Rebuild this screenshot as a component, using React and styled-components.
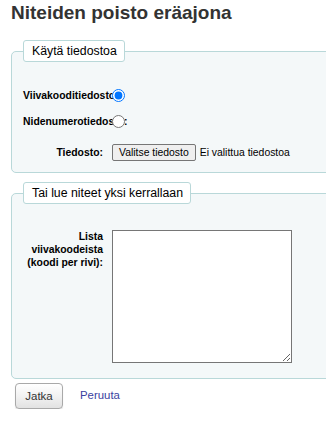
import React from "react";
import styled, { createGlobalStyle } from "styled-components";

const Global = createGlobalStyle`
  html, body { margin: 0; padding: 0; background: #ffffff; overflow: hidden; }
  body { font-family: "Liberation Sans", Arial, sans-serif; color: #000; }
`;

const Page = styled.div`
  padding: 2px 0 0 11px;
  width: 315px;
  overflow: hidden;
`;

const Title = styled.h1`
  margin: 0 0 16px;
  font-size: 19px;
  line-height: 22px;
  font-weight: bold;
  color: #333333;
  white-space: nowrap;
`;

const Fieldset = styled.fieldset`
  box-sizing: border-box;
  width: 360px;
  margin: 0 0 ${(p) => p.$mb}px;
  padding: 0 0 ${(p) => p.$pb}px 11px;
  border: 1px solid #b9d8d9;
  border-radius: 5px;
  background: #f4f8f9;
  min-inline-size: 0;
`;

const Legend = styled.legend`
  box-sizing: border-box;
  height: 22px;
  padding: 0 7px 0 8px;
  margin: 0;
  border: 1px solid #b9d8d9;
  border-radius: 3px;
  background: #ffffff;
  font-size: 12.3px;
  line-height: 20px;
  color: #000;
  white-space: nowrap;
`;

const Rows = styled.ol`
  list-style: none;
  margin: 0;
  padding: 0;
`;

const Row = styled.li`
  display: flex;
  align-items: ${(p) => (p.$top ? "flex-start" : "center")};
  min-height: 22px;
  margin-top: ${(p) => p.$mt}px;
`;

const Label = styled.label`
  flex: 0 0 80px;
  width: 80px;
  margin-right: 9px;
  font-size: 10.4px;
  font-weight: bold;
  line-height: 13px;
  text-align: right;
  white-space: ${(p) => (p.$wrap ? "normal" : "nowrap")};
  color: #000;
`;

const Radio = styled.input`
  position: relative;
  width: 13px;
  height: 13px;
  margin: 0;
  accent-color: #0075ff;
`;

const FileButton = styled.button`
  box-sizing: border-box;
  height: 17px;
  padding: 0 6px;
  margin: 0 4px 0 0;
  border: 1px solid #767676;
  border-radius: 2px;
  background: #efefef;
  font-family: "Liberation Sans", Arial, sans-serif;
  font-size: 10.4px;
  line-height: 15px;
  color: #000;
  white-space: nowrap;
`;

const FileText = styled.span`
  font-size: 10.4px;
  color: #000;
  white-space: nowrap;
`;

const TextArea = styled.textarea`
  box-sizing: border-box;
  width: 180px;
  height: 133px;
  margin: 0;
  border: 1px solid #767676;
  border-radius: 0;
  background: #ffffff;
`;

const Actions = styled.div`
  display: flex;
  align-items: center;
  gap: 17px;
  margin: 4px 0 0 4px;
`;

const Submit = styled.button`
  box-sizing: border-box;
  width: 48px;
  height: 26px;
  padding: 0;
  border: 1px solid #a9a9a9;
  border-radius: 4px;
  background: linear-gradient(to bottom, #ffffff 0%, #f2f2f2 50%, #e2e2e2 100%);
  box-shadow: 0 1px 1px rgba(0, 0, 0, 0.12);
  font-family: "Liberation Sans", Arial, sans-serif;
  font-size: 11.5px;
  color: #333333;
`;

const CancelLink = styled.a`
  font-size: 11.4px;
  color: #3b3fa0;
  text-decoration: none;
  margin-top: -2px;
`;

export default function App() {
  return (
    <>
      <Global />
      <Page>
        <Title>Niteiden poisto eräajona</Title>
        <Fieldset $mb={9} $pb={9}>
          <Legend>Käytä tiedostoa</Legend>
          <Rows>
            <Row $mt={22}>
              <Label htmlFor="barcode_file">Viivakooditiedosto:</Label>
              <Radio type="radio" name="filefrom" id="barcode_file" defaultChecked />
            </Row>
            <Row $mt={4}>
              <Label htmlFor="itemid_file">Nidenumerotiedosto:</Label>
              <Radio type="radio" name="filefrom" id="itemid_file" />
            </Row>
            <Row $mt={9}>
              <Label htmlFor="uploadfile">Tiedosto:</Label>
              <FileButton type="button" id="uploadfile">Valitse tiedosto</FileButton>
              <FileText>Ei valittua tiedostoa</FileText>
            </Row>
          </Rows>
        </Fieldset>
        <Fieldset $mb={0} $pb={15}>
          <Legend>Tai lue niteet yksi kerrallaan</Legend>
          <Rows>
            <Row $mt={26} $top>
              <Label htmlFor="barcodelist" $wrap>Lista viivakoodeista (koodi per rivi):</Label>
              <TextArea id="barcodelist" />
            </Row>
          </Rows>
        </Fieldset>
        <Actions>
          <Submit type="button">Jatka</Submit>
          <CancelLink href="#">Peruuta</CancelLink>
        </Actions>
      </Page>
    </>
  );
}
